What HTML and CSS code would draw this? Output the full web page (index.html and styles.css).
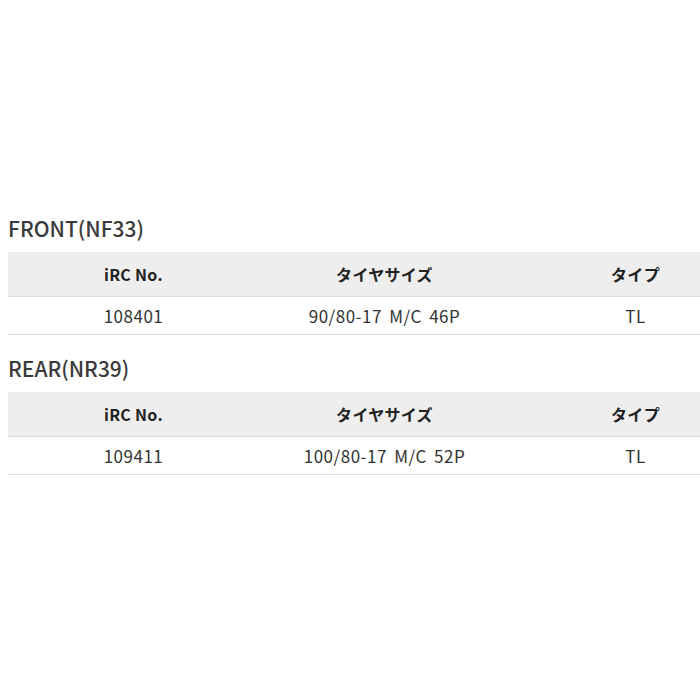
FILE: index.html
```html
<!DOCTYPE html>
<html lang="ja">
<head>
<meta charset="utf-8">
<link rel="stylesheet" href="styles.css">
</head>
<body>
<div class="page">
  <section class="spec">
    <h2 class="spec-title">FRONT(NF33)</h2>
    <table class="spec-table">
      <thead>
        <tr><th>iRC No.</th><th>タイヤサイズ</th><th>タイプ</th></tr>
      </thead>
      <tbody>
        <tr><td>108401</td><td>90/80-17 M/C 46P</td><td>TL</td></tr>
      </tbody>
    </table>
  </section>
  <section class="spec">
    <h2 class="spec-title">REAR(NR39)</h2>
    <table class="spec-table">
      <thead>
        <tr><th>iRC No.</th><th>タイヤサイズ</th><th>タイプ</th></tr>
      </thead>
      <tbody>
        <tr><td>109411</td><td>100/80-17 M/C 52P</td><td>TL</td></tr>
      </tbody>
    </table>
  </section>
</div>
</body>
</html>
```
FILE: styles.css
```css
html, body {
  margin: 0;
  padding: 0;
  background: #fff;
  overflow: hidden;
}
body {
  font-family: "Noto Sans CJK JP", "Noto Sans", sans-serif;
  color: #333;
}
.page {
  padding: 213px 0 0 8px;
  width: 800px;
}
.spec {
  margin-bottom: 18px;
}
.spec-title {
  margin: 0 0 9px 0;
  font-size: 21px;
  line-height: 30px;
  font-weight: 500;
  color: #3a3a3a;
}
.spec-table {
  width: 753px;
  border-collapse: collapse;
  table-layout: fixed;
}
.spec-table th,
.spec-table td {
  text-align: center;
  padding: 0;
  border-bottom: 1px solid #ddd;
}
.spec-table th {
  background: #eeeeee;
  height: 44px;
  font-size: 16px;
  font-weight: bold;
  letter-spacing: 0.3px;
  color: #222;
}
.spec-table td {
  height: 37px;
  font-size: 17px;
  font-weight: normal;
  letter-spacing: 0.5px;
  word-spacing: 3px;
  color: #333;
}
```
